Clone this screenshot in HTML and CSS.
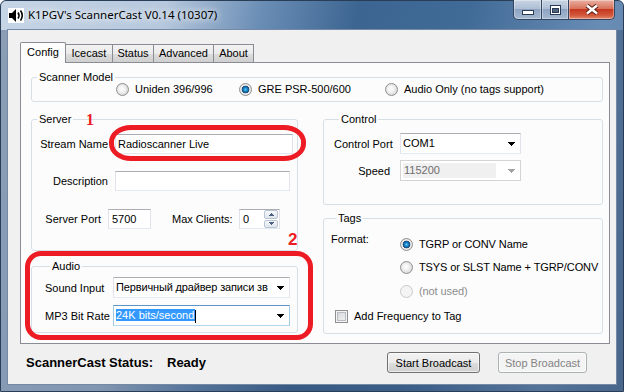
FILE: index.html
```html
<!DOCTYPE html>
<html lang="en">
  <head>
    <meta charset="UTF-8" />
    <title>K1PGV's ScannerCast V0.14 (10307)</title>
    <link rel="stylesheet" href="styles.css">
  </head>
  <body>
    <div class="window">
      <div class="titlebar">
        <svg class="app-icon" width="16" height="15" viewBox="0 0 16 15">
          <rect width="16" height="15" fill="#fff" />
          <path d="M1 5h3l4-4v13l-4-4H1z" fill="#000" />
          <path d="M10 4.5q2 3 0 6" stroke="#000" stroke-width="1.6" fill="none" />
          <path d="M12.5 2.5q3.5 5 0 10" stroke="#000" stroke-width="1.6" fill="none" />
        </svg>
        <span class="title">K1PGV's ScannerCast V0.14 (10307)</span>
        <div class="caption">
          <span class="cap-btn cap-min">
            <svg width="12" height="5"><rect x="0.5" y="0.5" width="11" height="4" fill="#fff" stroke="#2a3b55" /></svg>
          </span>
          <span class="cap-btn cap-max">
            <svg width="11" height="10"><rect x="0.5" y="0.5" width="10" height="9" fill="#fff" stroke="#2a3b55" /><rect x="2.5" y="3.5" width="6" height="4" fill="#51627d" stroke="#2a3b55" /></svg>
          </span>
          <span class="cap-btn cap-close">
            <svg width="14" height="11"><path d="M2 1.5l10 8M12 1.5l-10 8" stroke="#5b2016" stroke-width="4.4" /><path d="M2 1.5l10 8M12 1.5l-10 8" stroke="#fff" stroke-width="2.4" /></svg>
          </span>
        </div>
      </div>

      <div class="client">
        <div class="tabs">
          <span class="tab tab-active">Config</span>
          <span class="tab tab-icecast">Icecast</span>
          <span class="tab tab-status">Status</span>
          <span class="tab tab-advanced">Advanced</span>
          <span class="tab tab-about">About</span>
        </div>

        <div class="panel">
          <div class="group group-model">
            <span class="legend">Scanner Model</span>
            <div class="model-options">
              <label class="radio opt-uniden"><span class="rb"></span>Uniden 396/996</label>
              <label class="radio opt-gre"><span class="rb rb-on"></span>GRE PSR-500/600</label>
              <label class="radio"><span class="rb"></span>Audio Only (no tags support)</label>
            </div>
          </div>

          <div class="columns">
            <div class="col col-left">
              <div class="group group-server">
                <span class="legend">Server</span>
                <div class="row row-stream">
                  <span class="lbl lbl-server">Stream Name</span>
                  <span class="textbox tb-stream">Radioscanner Live</span>
                </div>
                <div class="row row-desc">
                  <span class="lbl lbl-server">Description</span>
                  <span class="textbox tb-desc"></span>
                </div>
                <div class="row row-port">
                  <span class="lbl lbl-port">Server Port</span>
                  <span class="textbox tb-port">5700</span>
                  <span class="lbl lbl-max">Max Clients:</span>
                  <span class="numeric">
                    <span class="num-val">0</span>
                    <span class="spin">
                      <span class="spin-btn"><svg width="5" height="3"><path d="M2 0h1v1h1v1h1v1H0V2h1V1h1z" fill="#4c607f" /></svg></span>
                      <span class="spin-btn"><svg width="5" height="3"><path d="M0 0h5v1H4v1H3v1H2V2H1V1H0z" fill="#4c607f" /></svg></span>
                    </span>
                  </span>
                </div>
              </div>

              <div class="group group-audio">
                <span class="legend">Audio</span>
                <div class="row row-sound">
                  <span class="lbl lbl-audio">Sound Input</span>
                  <span class="combo combo-audio">
                    <span class="combo-val">Первичный драйвер записи зв</span>
                    <svg class="arrow" width="7" height="4"><path d="M0 0h7v1H6v1H5v1H4v1H3V3H2V2H1V1H0z" /></svg>
                  </span>
                </div>
                <div class="row row-bitrate">
                  <span class="lbl lbl-audio">MP3 Bit Rate</span>
                  <span class="combo combo-audio combo-focus">
                    <span class="combo-val"><span class="selected">24K bits/second</span><span class="caret"></span></span>
                    <svg class="arrow" width="7" height="4"><path d="M0 0h7v1H6v1H5v1H4v1H3V3H2V2H1V1H0z" /></svg>
                  </span>
                </div>
              </div>
            </div>

            <div class="col col-right">
              <div class="group group-control">
                <span class="legend">Control</span>
                <div class="row row-port1">
                  <span class="lbl lbl-control">Control Port</span>
                  <span class="combo combo-control">
                    <span class="combo-val">COM1</span>
                    <svg class="arrow" width="7" height="4"><path d="M0 0h7v1H6v1H5v1H4v1H3V3H2V2H1V1H0z" /></svg>
                  </span>
                </div>
                <div class="row row-speed">
                  <span class="lbl lbl-control">Speed</span>
                  <span class="combo combo-control combo-disabled">
                    <span class="combo-val">115200</span>
                    <svg class="arrow" width="7" height="4"><path d="M0 0h7v1H6v1H5v1H4v1H3V3H2V2H1V1H0z" /></svg>
                  </span>
                </div>
              </div>

              <div class="group group-tags">
                <span class="legend">Tags</span>
                <div class="format">
                  <span class="lbl-format">Format:</span>
                  <div class="format-options">
                    <label class="radio"><span class="rb rb-on"></span>TGRP or CONV Name</label>
                    <label class="radio"><span class="rb"></span>TSYS or SLST Name + TGRP/CONV</label>
                    <label class="radio radio-disabled"><span class="rb"></span>(not used)</label>
                  </div>
                </div>
                <label class="check"><span class="cb"></span>Add Frequency to Tag</label>
              </div>
            </div>
          </div>

          <span class="mark mark-stream"></span>
          <span class="mark mark-audio"></span>
          <span class="num-note note-1">1</span>
          <span class="num-note note-2">2</span>
        </div>

        <div class="statusbar">
          <span class="status-label">ScannerCast Status:</span>
          <span class="status-value">Ready</span>
          <button class="btn btn-start">Start Broadcast</button>
          <button class="btn btn-stop" disabled>Stop Broadcast</button>
        </div>
      </div>
    </div>
  </body>
</html>
```

FILE: styles.css
```css
* {
  box-sizing: border-box;
}

body {
  margin: 0;
  font-family: "Liberation Sans", Arial, sans-serif;
  font-size: 11px;
  color: #000;
}

.window {
  width: 624px;
  height: 392px;
  display: flex;
  flex-direction: column;
  padding: 0 7px 7px;
  border: 1px solid #2a3d57;
  border-radius: 6px 6px 0 0;
  background:
    linear-gradient(180deg, rgba(0, 0, 0, 0) 29px, rgba(50, 75, 110, 0.4) 29px),
    linear-gradient(100deg, #c6d5e6 0%, #b6c8dd 24%, #6a8db5 38%, #3c6591 52%, #416b97 68%, #6a8db6 88%, #58799f 100%);
}

/* title bar */
.titlebar {
  height: 29px;
  display: flex;
  align-items: flex-start;
}

.app-icon {
  margin-top: 7px;
  flex: none;
}

.title {
  margin-left: 4px;
  line-height: 28px;
  font-family: "Noto Sans", sans-serif;
  font-size: 11.5px;
  text-shadow: 0 0 6px #fff, 0 0 10px rgba(255, 255, 255, 0.9);
}

.caption {
  margin-left: auto;
  margin-right: 1px;
  margin-top: -1px;
  display: flex;
}

.cap-btn {
  height: 20px;
  display: flex;
  align-items: center;
  justify-content: center;
  border: 1px solid #34465f;
  border-top: none;
  box-shadow: inset 0 0 0 1px rgba(255, 255, 255, 0.35);
  background: linear-gradient(#c9d5e4, #aebfd5 45%, #8ea4c1 50%, #a4b8d1);
}

.cap-min {
  width: 29px;
  border-radius: 0 0 0 5px;
  padding-top: 5px;
}

.cap-max {
  width: 27px;
  border-left: none;
}

.cap-close {
  width: 46px;
  border-left: none;
  border-radius: 0 0 5px 0;
  background: linear-gradient(#eab0a2, #d9735c 45%, #c5391f 50%, #d2563b 80%, #e58b6e);
}

/* client area */
.client {
  flex: 1;
  background-color: #f0f0f0;
  box-shadow: 0 0 0 1px #7489a5;
}

.tabs {
  display: flex;
  align-items: flex-end;
  height: 20px;
  margin: 12px 0 0 12px;
}

.tab {
  height: 18px;
  margin-left: -1px;
  border: 1px solid #898c95;
  border-bottom: none;
  text-align: center;
  line-height: 17px;
  background: linear-gradient(#f2f2f2, #ebebeb 50%, #dddddd 51%, #cfcfcf);
}

.tab-active {
  position: relative;
  z-index: 1;
  width: 46px;
  height: 21px;
  margin-left: 0;
  margin-bottom: -1px;
  line-height: 19px;
  background: #fcfcfc;
  border-radius: 2px 2px 0 0;
}

.tab-icecast { width: 48px; }
.tab-status { width: 42px; }
.tab-advanced { width: 61px; }
.tab-about { width: 41px; }

.panel {
  position: relative;
  width: 590px;
  height: 282px;
  margin-left: 12px;
  padding: 14px 0 0 10px;
  border: 1px solid #898c95;
  background: #fcfcfc;
}

/* group boxes */
.group {
  border: 1px solid #d5dfe5;
  border-radius: 3px;
}

.legend {
  display: block;
  width: max-content;
  margin: -7px 0 0 5px;
  padding: 0 2px;
  line-height: 13px;
  background: #fcfcfc;
}

.group-model {
  width: 572px;
  height: 25px;
}

.model-options {
  display: flex;
  margin-top: -1px;
  padding-left: 84px;
}

.opt-uniden { width: 123px; }
.opt-gre { width: 146px; }

.columns {
  display: flex;
  gap: 25px;
  margin-top: 17px;
}

.col {
  display: flex;
  flex-direction: column;
}

.col-left { width: 267px; }
.col-right { width: 280px; }

.group-server { height: 132px; }

.group-audio {
  height: 67px;
  margin-top: 15px;
  padding-left: 13px;
}

.group-control {
  height: 86px;
  padding-left: 10px;
}

.group-tags {
  height: 116px;
  margin-top: 13px;
  padding-left: 7px;
}

.row {
  display: flex;
  align-items: center;
  height: 20px;
}

.lbl {
  white-space: nowrap;
}

.lbl-server {
  width: 76px;
  text-align: right;
}

.lbl-port {
  width: 69px;
  text-align: right;
}

.lbl-max {
  width: 60px;
  margin-left: 21px;
}

.lbl-audio {
  width: 68px;
}

.lbl-control {
  width: 56px;
  text-align: right;
}

.row-stream { margin-top: 8px; }
.row-desc { margin-top: 17px; }
.row-port { margin-top: 18px; }
.row-sound { margin-top: 4px; height: 21px; }
.row-bitrate { margin-top: 7px; height: 21px; }
.row-port1 { margin-top: 7px; height: 21px; }
.row-speed { margin-top: 6px; height: 21px; }

/* inputs */
.textbox,
.numeric,
.combo {
  height: 20px;
  border: 1px solid #e2e3ea;
  border-top-color: #abadb3;
  border-bottom-color: #e3e9ef;
  background: #fff;
}

.textbox {
  display: block;
  margin-left: 7px;
  padding-left: 2px;
  line-height: 18px;
}

.tb-stream { width: 178px; }
.tb-desc { width: 175px; }
.tb-port { width: 43px; padding-left: 3px; }

.numeric {
  display: flex;
  width: 41px;
  margin-left: 7px;
}

.num-val {
  flex: 1;
  padding-left: 3px;
  line-height: 18px;
}

.spin {
  width: 15px;
  display: flex;
  flex-direction: column;
  gap: 1px;
  padding: 0 1px 0 0;
}

.spin-btn {
  flex: 1;
  display: flex;
  align-items: center;
  justify-content: center;
  border: 1px solid #b9c4d3;
  border-radius: 2px;
  background: linear-gradient(#f6f8fb, #dfe5ee);
}

.combo {
  display: flex;
  align-items: center;
  height: 21px;
  padding: 0 5px 0 2px;
}

.combo-audio { width: 177px; }

.combo-control {
  width: 121px;
  margin-left: 10px;
}

.combo-val {
  flex: 1;
  overflow: hidden;
  white-space: nowrap;
  line-height: 15px;
}

.combo-audio .combo-val {
  letter-spacing: -0.15px;
}

.arrow {
  flex: none;
  margin-left: 4px;
  fill: #000;
}

.combo-focus {
  border-color: #a4c9e3;
  border-top-color: #5e94c8;
  border-bottom-color: #b7d9ed;
}

.combo-focus .combo-val {
  letter-spacing: 0;
}

.selected {
  background: #3399ff;
  color: #fff;
  padding-right: 1px;
}

.caret {
  display: inline-block;
  width: 1px;
  height: 13px;
  background: #000;
  vertical-align: middle;
}

.combo-disabled {
  border-color: #d4d4d4;
  padding: 2px 5px 2px 2px;
}

.combo-disabled .combo-val {
  height: 15px;
  padding-left: 1px;
  margin-right: 8px;
  background: #f0f0f0;
  color: #6d6d6d;
}

.combo-disabled .arrow {
  fill: #a3a3a3;
}

/* radios and checkbox */
.radio,
.check {
  display: flex;
  align-items: center;
  gap: 6px;
  height: 13px;
  line-height: 13px;
  white-space: nowrap;
}

.rb {
  flex: none;
  width: 13px;
  height: 13px;
  border-radius: 50%;
  border: 1px solid #8e8f8f;
  background: radial-gradient(circle at 45% 45%, #ffffff 0, #f2f2f2 35%, #d4d4d4 80%);
}

.rb-on {
  background: radial-gradient(circle, #5bcaf5 0, #1f8ed0 1.6px, #0e5b98 3px, #33506c 3.6px, #f4f4f4 4.2px, #d4d4d4 80%);
}

.radio-disabled {
  color: #8d8d8d;
}

.radio-disabled .rb {
  border-color: #cacaca;
  background: #f4f4f4;
}

.format {
  display: flex;
  align-items: flex-start;
  margin-top: 8px;
}

.lbl-format {
  width: 69px;
  line-height: 13px;
}

.format-options {
  display: flex;
  flex-direction: column;
  margin-top: 5px;
  letter-spacing: -0.1px;
}

.format-options .radio + .radio {
  margin-top: 10px;
}

.format-options .radio-disabled {
  margin-top: 11px !important;
}

.check {
  margin-top: 12px;
  padding-left: 4px;
}

.cb {
  flex: none;
  width: 13px;
  height: 13px;
  border: 1px solid #8e8f8f;
  background: linear-gradient(135deg, #cfd2d6, #f7f7f7);
  box-shadow: inset 0 0 0 1px #f4f4f4, inset 0 0 0 2px #b8bcc2;
}

/* red annotations drawn over the form */
.mark {
  position: absolute;
  border: 5px solid #ed1c24;
}

.mark-stream {
  left: 88px;
  top: 62px;
  width: 197px;
  height: 36px;
  border-radius: 22px / 17px;
}

.mark-audio {
  left: 4px;
  top: 188px;
  width: 288px;
  height: 89px;
  border-radius: 16px;
}

.num-note {
  position: absolute;
  color: #ed1c24;
  font-weight: bold;
  line-height: 1;
}

.note-1 {
  left: 65px;
  top: 49px;
  font-family: "Liberation Serif", serif;
  font-size: 16px;
}

.note-2 {
  left: 267px;
  top: 168px;
  font-size: 17px;
}

/* bottom status row */
.statusbar {
  display: flex;
  align-items: center;
  height: 21px;
  margin-top: 8px;
  padding: 0 29px 0 18px;
}

.status-label {
  width: 141px;
  font-size: 13px;
  font-weight: bold;
}

.status-value {
  font-size: 13px;
  font-weight: bold;
}

.btn {
  height: 21px;
  padding: 0;
  font-family: "Liberation Sans", Arial, sans-serif;
  font-size: 11px;
  color: #000;
  border: 1px solid #707070;
  border-radius: 3px;
  background: linear-gradient(#f2f2f2, #ebebeb 50%, #dddddd 51%, #cfcfcf);
  box-shadow: inset 0 0 0 1px rgba(255, 255, 255, 0.6);
}

.btn-start {
  width: 93px;
  margin-left: auto;
}

.btn-stop {
  width: 89px;
  margin-left: 18px;
  color: #838383;
  border-color: #adb2b5;
  background: #f4f4f4;
}
```
